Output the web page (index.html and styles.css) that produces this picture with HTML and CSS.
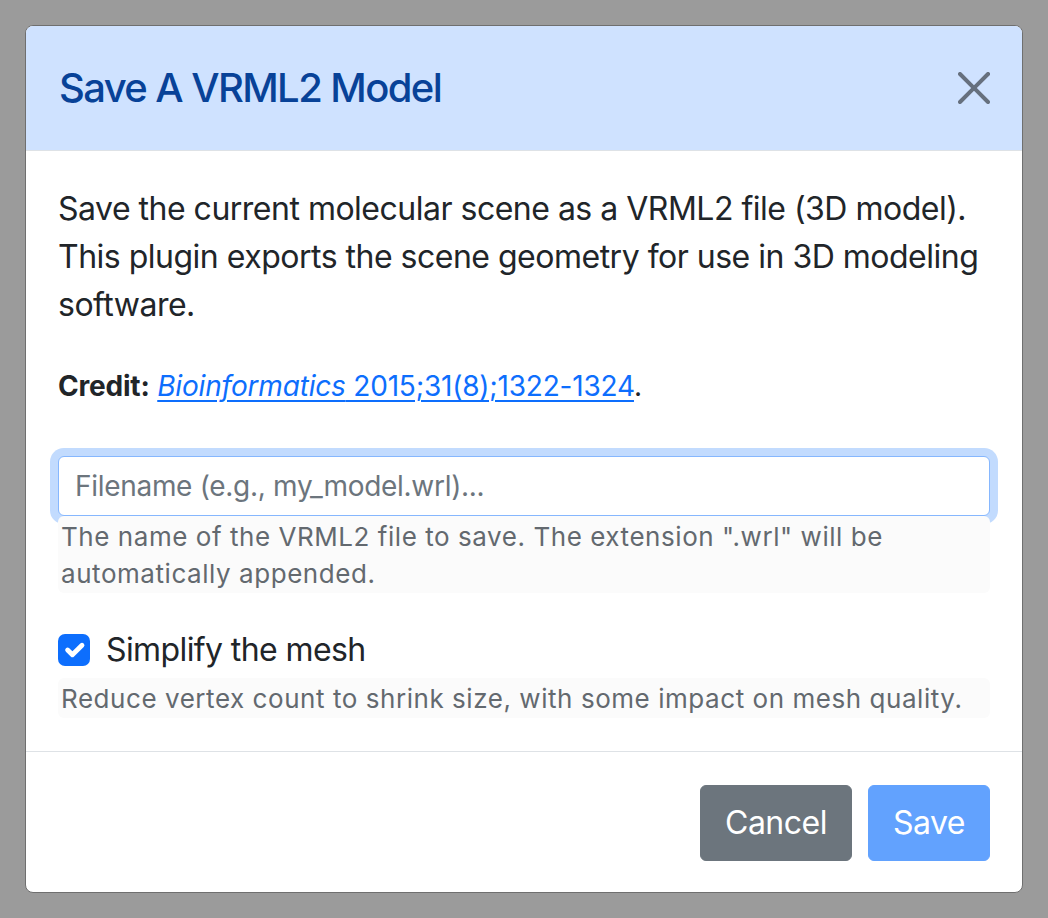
FILE: index.html
```html
<!DOCTYPE html>
<html lang="en">
<head>
<meta charset="utf-8">
<title>Save A VRML2 Model</title>
<link rel="stylesheet" href="styles.css">
</head>
<body>
<div class="modal">
  <div class="modal-header">
    <h5 class="modal-title">Save A VRML2 Model</h5>
    <button class="btn-close" type="button" aria-label="Close">
      <svg viewBox="0 0 16 16" width="32" height="32"><path d="M.293.293a1 1 0 0 1 1.414 0L8 6.586 14.293.293a1 1 0 1 1 1.414 1.414L9.414 8l6.293 6.293a1 1 0 0 1-1.414 1.414L8 9.414l-6.293 6.293a1 1 0 0 1-1.414-1.414L6.586 8 .293 1.707a1 1 0 0 1 0-1.414z" fill="#000"/></svg>
    </button>
  </div>
  <div class="modal-body">
    <p class="intro">Save the current molecular scene as a VRML2 file (3D model). This plugin exports the scene geometry for use in 3D modeling software.</p>
    <p class="credit"><strong>Credit:</strong> <a href="#"><em>Bioinformatics</em> 2015;31(8);1322-1324</a>.</p>
    <input class="form-control" type="text" placeholder="Filename (e.g., my_model.wrl)...">
    <div class="form-text help-file">The name of the VRML2 file to save. The extension ".wrl" will be automatically appended.</div>
    <label class="form-check">
      <span class="check-box"><svg viewBox="0 0 20 20" width="32" height="32"><path d="m6 10 3 3 6-6" fill="none" stroke="#fff" stroke-linecap="round" stroke-linejoin="round" stroke-width="3"/></svg></span>
      <span class="check-label">Simplify the mesh</span>
    </label>
    <div class="form-text help-mesh">Reduce vertex count to shrink size, with some impact on mesh quality.</div>
  </div>
  <div class="modal-footer">
    <button class="btn btn-secondary" type="button">Cancel</button>
    <button class="btn btn-primary" type="button" disabled>Save</button>
  </div>
</div>
</body>
</html>
```
FILE: styles.css
```css
html, body {
  margin: 0;
  padding: 0;
}
body {
  background: #9b9b9b;
  padding: 25px;
  font-family: Inter, "Noto Sans", "Liberation Sans", sans-serif;
  color: #212529;
  font-size: 32px;
  line-height: 1.5;
  letter-spacing: -0.5px;
}
.modal {
  width: 998px;
  box-sizing: border-box;
  background: #fff;
  border: 1px solid #6f6f6f;
  border-radius: 8px;
  overflow: hidden;
}
.modal-header {
  height: 125px;
  box-sizing: border-box;
  background: #cfe2ff;
  border-bottom: 1px solid #dee2e6;
  display: flex;
  align-items: center;
  justify-content: space-between;
  padding: 0 32px 0 33px;
}
.modal-title {
  margin: 0;
  font-size: 40px;
  font-weight: 500;
  line-height: 60px;
  letter-spacing: -1.6px;
  color: #084298;
}
.btn-close {
  border: 0;
  background: transparent;
  padding: 0;
  width: 32px;
  height: 32px;
  opacity: 0.5;
  display: flex;
}
.modal-body {
  padding: 34px 32px 33px 32px;
}
.intro {
  margin: 0 0 36px;
}
.credit {
  margin: 0 0 49px;
  font-size: 28px;
  line-height: 42px;
  letter-spacing: -0.2px;
}
.credit strong {
  font-weight: 700;
}
.credit a {
  color: #0d6efd;
  text-decoration: underline;
  text-underline-offset: 4px;
  text-decoration-thickness: 2px;
}
.form-control {
  display: block;
  width: 100%;
  box-sizing: border-box;
  height: 60px;
  margin: 0;
  padding: 8px 16px;
  font-family: inherit;
  font-size: 28px;
  line-height: 42px;
  letter-spacing: -0.3px;
  color: #212529;
  border: 1px solid #86b7fe;
  border-radius: 6px;
  box-shadow: 0 0 0 8px rgba(13, 110, 253, 0.25);
  outline: none;
}
.form-control::placeholder {
  color: #6c757d;
}
.form-text {
  font-size: 26px;
  line-height: 37px;
  letter-spacing: 0.55px;
  color: #63696f;
  background: #fbfbfb;
  border-radius: 6px;
  padding: 2px 3px 1px;
}
.help-file {
  margin-top: 0;
}
.form-check {
  display: flex;
  align-items: flex-start;
  gap: 16px;
  margin-top: 33px;
  height: 48px;
}
.check-box {
  width: 32px;
  height: 32px;
  margin-top: 8px;
  background: #0d6efd;
  border-radius: 7px;
  display: flex;
  flex: none;
}
.check-label {
  line-height: 48px;
  letter-spacing: -0.6px;
}
.help-mesh {
  margin-top: 4px;
}
.modal-footer {
  border-top: 1px solid #dee2e6;
  display: flex;
  justify-content: flex-end;
  gap: 16px;
  padding: 33px 32px 31px;
}
.btn {
  font-family: inherit;
  font-size: 32px;
  line-height: 48px;
  letter-spacing: -0.5px;
  padding: 13px 24px;
  border: 1px solid transparent;
  border-radius: 6px;
  color: #fff;
}
.btn-secondary {
  background: #6c757d;
  border-color: #6c757d;
}
.btn-primary {
  background: #62a2fe;
  border-color: #62a2fe;
}
```
